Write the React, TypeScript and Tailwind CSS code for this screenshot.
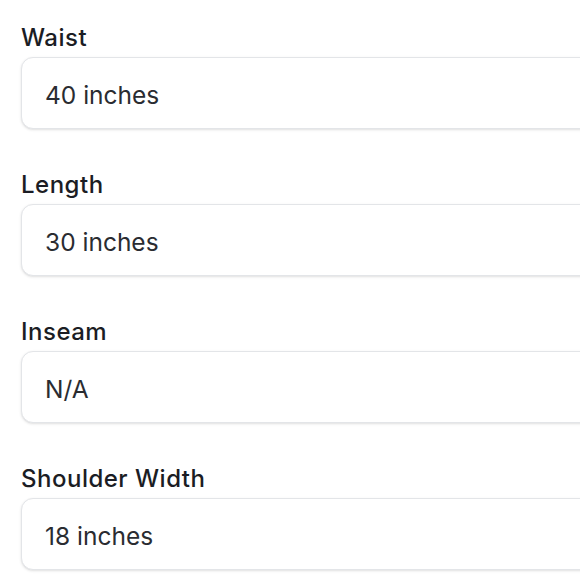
const FIELDS = [
  { label: 'Waist', value: '40 inches' },
  { label: 'Length', value: '30 inches' },
  { label: 'Inseam', value: 'N/A' },
  { label: 'Shoulder Width', value: '18 inches' },
]

export default function App() {
  return (
    <div
      className="w-[580px] h-[580px] overflow-hidden bg-white pt-[24px] pl-[21px]"
      style={{ fontFamily: 'Inter, "Noto Sans", sans-serif' }}
    >
      <div className="flex flex-col gap-[42px] w-[640px]">
        {FIELDS.map((f) => (
          <div key={f.label} className="flex flex-col gap-[5px]">
            <label className="text-[24px] leading-[28px] font-medium text-[#1b1d24] tracking-[0.5px]">{f.label}</label>
            <input
              readOnly
              value={f.value}
              className="h-[72px] w-full rounded-[12px] border border-[#e3e5e8] bg-white px-[23px] pt-[4px] text-[24.5px] text-[#2a2c31] shadow-sm outline-none"
            />
          </div>
        ))}
      </div>
    </div>
  )
}
